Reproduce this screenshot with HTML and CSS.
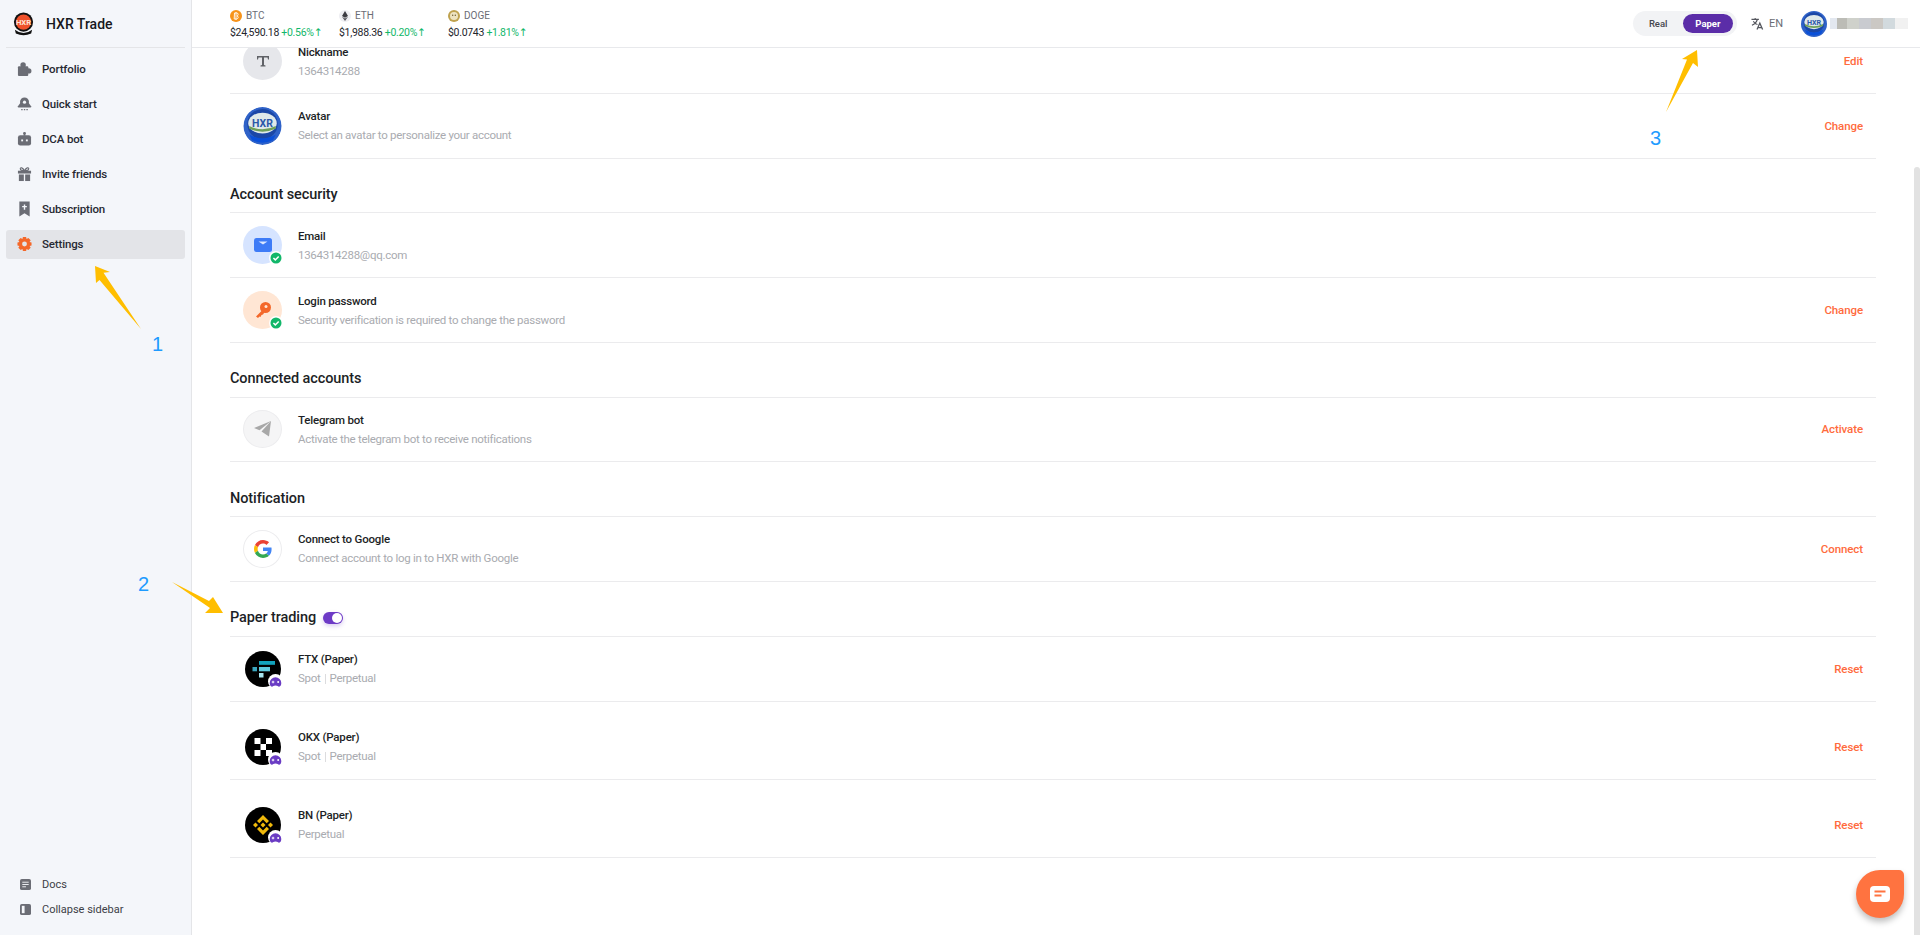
FILE: index.html
```html
<!DOCTYPE html>
<html lang="en">
<head>
  <meta charset="UTF-8">
  <title>HXR Trade - Settings</title>
  <link rel="stylesheet" href="styles.css">
</head>
<body>
  <svg class="defs" width="0" height="0">
    <defs>
      <g id="hxr-blue">
        <circle cx="20" cy="20" r="20" fill="#2f62c8"/>
        <circle cx="20" cy="18" r="16" fill="#1b47a6"/>
        <ellipse cx="20" cy="17" rx="15" ry="11" fill="#dfe9ea"/>
        <path d="M6 20q14 7 28 0v3q-14 6-28 0z" fill="#6fa05a"/>
        <text x="20" y="21" text-anchor="middle" class="helmet-txt" fill="#2b58a8">HXR</text>
        <path d="M6 29q14 8 28 0l-3 6q-11 5-22 0z" fill="#0a50d8"/>
      </g>
      <g id="badge-ok">
        <circle cx="7" cy="7" r="7" fill="#fff"/>
        <circle cx="7" cy="7" r="5.500" fill="#12b76a"/>
        <path d="M4.400 7l1.900 1.900 3.400-3.500" fill="none" stroke="#fff" stroke-width="1.500"/>
      </g>
      <g id="badge-game">
        <circle cx="7" cy="7" r="7" fill="#fff"/>
        <path d="M1.600 8.500a5.400 5.400 0 0 1 10.800 0c0 2.300-1 3.300-2 3.300-1.100 0-1.500-1-3.400-1s-2.300 1-3.400 1c-1 0-2-1-2-3.300z" fill="#6a3cc4"/>
        <path d="M3.500 7.500h2.400M4.700 6.300v2.400" stroke="#fff" stroke-width=".9"/>
        <circle cx="9.500" cy="7.500" r=".9" fill="#fff"/>
      </g>
    </defs>
  </svg>

  <div class="app">
    <aside class="sidebar">
      <div class="brand">
        <svg class="logo" viewBox="0 0 24 24">
          <path d="M3 18q9 7 18 0l-1 4q-8 3.500-16 0z" fill="#111"/>
          <circle cx="12" cy="10" r="10" fill="#111"/>
          <circle cx="12" cy="10" r="8" fill="#f0512b"/>
          <text x="12" y="12.800" text-anchor="middle" class="logo-txt" fill="#ffe3d6">HXR</text>
        </svg>
        <span class="brand-name">HXR Trade</span>
      </div>

      <nav class="nav">
        <a class="nav-item">
          <svg viewBox="0 0 16 16" fill="#6b6d75"><rect x="1" y="5" width="11" height="10.500" rx="1"/><circle cx="6.500" cy="3.700" r="2.900"/><circle cx="12.500" cy="10" r="2.900"/></svg>
          Portfolio
        </a>
        <a class="nav-item">
          <svg viewBox="0 0 16 16"><circle cx="8" cy="5.800" r="4.800" fill="#6b6d75"/><path d="M3.500 7L1 10.500q-.5 1.300.8 1.300h12.400q1.300 0 .8-1.300L12.500 7z" fill="#6b6d75"/><circle cx="8" cy="6" r="1.700" fill="#f4f6fa"/><path d="M4.500 14h1.500M7.300 14h1.500M10 14h1.500" stroke="#6b6d75" stroke-width="1.300"/></svg>
          Quick start
        </a>
        <a class="nav-item">
          <svg viewBox="0 0 16 16"><rect x="1" y="4" width="14" height="11" rx="2.500" fill="#6b6d75"/><rect x="7" y="1" width="2" height="3.500" fill="#6b6d75"/><circle cx="8" cy="1.800" r="1.300" fill="#6b6d75"/><rect x="4.500" y="8.500" width="2" height="2" fill="#f4f6fa"/><rect x="9.500" y="8.500" width="2" height="2" fill="#f4f6fa"/></svg>
          DCA bot
        </a>
        <a class="nav-item">
          <svg viewBox="0 0 16 16"><rect x="1" y="4.500" width="14" height="3" fill="#6b6d75"/><rect x="2" y="8.500" width="5.300" height="7" fill="#6b6d75"/><rect x="8.700" y="8.500" width="5.300" height="7" fill="#6b6d75"/><path d="M8 4.500C6 1 3.500.500 3.500 2.500S6 4.500 8 4.500zm0 0c2-3.500 4.500-4 4.500-2s-2.500 2-4.500 2z" fill="none" stroke="#6b6d75" stroke-width="1.200"/></svg>
          Invite friends
        </a>
        <a class="nav-item">
          <svg viewBox="0 0 16 16"><path d="M2.500 0h11v16L8 12.500 2.500 16z" fill="#6b6d75"/><path d="M8 3.200v5.600M5.500 5.500h5" stroke="#f4f6fa" stroke-width="1.500"/></svg>
          Subscription
        </a>
        <a class="nav-item active">
          <svg viewBox="0 0 16 16"><path d="M6.300.500h3.400l.5 2.100 1.900-1 2.500 2.500-1.200 1.800 2.100.5v3.200l-2.100.5 1.200 1.800-2.500 2.500-1.900-1-.5 2.100H6.300l-.5-2.100-1.900 1-2.500-2.500L2.600 10.100.5 9.600V6.400l2.100-.5L1.400 4.100 3.900 1.600l1.900 1z" fill="#f4682a"/><circle cx="8" cy="8" r="2.600" fill="#e3e4e8"/></svg>
          Settings
        </a>
      </nav>

      <div class="side-bottom">
        <a class="side-link">
          <svg viewBox="0 0 12 12"><rect width="12" height="12" rx="2" fill="#6b6d75"/><path d="M2.500 3.500h7M2.500 6h7M2.500 8.500h4" stroke="#f4f6fa"/></svg>
          Docs
        </a>
        <a class="side-link">
          <svg viewBox="0 0 12 12"><rect width="12" height="12" rx="2" fill="#6b6d75"/><rect x="2" y="2" width="3" height="8" fill="#f4f6fa"/></svg>
          Collapse sidebar
        </a>
      </div>
    </aside>

    <div class="main">
      <header class="topbar">
        <div class="tickers">
          <div class="ticker">
            <div class="coin">
              <svg viewBox="0 0 12 12"><circle cx="6" cy="6" r="6" fill="#f7931a"/><path d="M4.500 3h2.300q1.500.2 1.300 1.500T7 6q1.400.3 1.200 1.500T6.500 9H4.200zM6 2v8" fill="none" stroke="#fff" stroke-width=".9"/></svg>
              BTC
            </div>
            <div class="quote">$24,590.18 <span class="up">+0.56%<i class="arr">↑</i></span></div>
          </div>
          <div class="ticker">
            <div class="coin">
              <svg viewBox="0 0 12 12"><circle cx="6" cy="6" r="6" fill="#eeeef2"/><path d="M6 1l3 5-3 1.800L3 6z" fill="#3c3c42"/><path d="M3 6.800l3 1.800 3-1.800L6 11z" fill="#55555c"/></svg>
              ETH
            </div>
            <div class="quote">$1,988.36 <span class="up">+0.20%<i class="arr">↑</i></span></div>
          </div>
          <div class="ticker">
            <div class="coin">
              <svg viewBox="0 0 12 12"><circle cx="6" cy="6" r="6" fill="#bfa24f"/><circle cx="6" cy="6" r="4" fill="#eee3c0"/><circle cx="4.700" cy="5.300" r=".7" fill="#6b5a2a"/><circle cx="7.300" cy="5.300" r=".7" fill="#6b5a2a"/></svg>
              DOGE
            </div>
            <div class="quote">$0.0743 <span class="up">+1.81%<i class="arr">↑</i></span></div>
          </div>
        </div>

        <div class="top-right">
          <div class="mode-switch">
            <span class="mode">Real</span>
            <span class="mode on">Paper</span>
          </div>
          <div class="lang">
            <svg viewBox="0 0 14 14"><path d="M.500 2.500h8M4.500 1v1.500M7 2.500Q5.500 7 1 9M2.500 4.500Q4 7.500 7 8" fill="none" stroke="#55575e" stroke-width="1.200"/><path d="M6.500 13.500l3-7 3 7M7.700 11.500h3.600" fill="none" stroke="#55575e" stroke-width="1.400"/></svg>
            EN
          </div>
          <svg class="user-avatar" viewBox="0 0 40 40"><use href="#hxr-blue"/></svg>
          <div class="user-name"><i></i><i></i><i></i><i></i><i></i><i></i><i></i></div>
        </div>
      </header>

      <div class="content">
        <div class="settings">
          <div class="row">
            <div class="pic grey">
              <svg viewBox="0 0 16 16" width="16" height="16"><path d="M2 3h12v3.500h-1L12.500 4.500H9V12l1.500.6V13.500h-5v-.9L7 12V4.500H3.500L3 6.500H2z" fill="#606267"/></svg>
            </div>
            <div class="info">
              <div class="name">Nickname</div>
              <div class="desc">1364314288</div>
            </div>
            <a class="action">Edit</a>
          </div>
          <div class="row">
            <svg class="pic" viewBox="0 0 40 40"><use href="#hxr-blue"/></svg>
            <div class="info">
              <div class="name">Avatar</div>
              <div class="desc">Select an avatar to personalize your account</div>
            </div>
            <a class="action">Change</a>
          </div>

          <h2 class="section">Account security</h2>
          <div class="row">
            <div class="pic blue">
              <svg viewBox="0 0 18 14" width="18" height="14"><rect width="18" height="14" rx="2.500" fill="#3d7bf7"/><path d="M4.500 3.500h9L9 6.500z" fill="#dbe7ff"/></svg>
              <svg class="badge" viewBox="0 0 14 14"><use href="#badge-ok"/></svg>
            </div>
            <div class="info">
              <div class="name">Email</div>
              <div class="desc">1364314288@qq.com</div>
            </div>
          </div>
          <div class="row">
            <div class="pic peach">
              <svg viewBox="0 0 18 18" width="18" height="18"><circle cx="11.500" cy="6.500" r="5.500" fill="#f4682a"/><circle cx="12" cy="5.500" r="1.500" fill="#ffe6d4"/><path d="M8 9.500L2 15.500l2 1.500 1.500-1.500 1 .5 1-2 1.500-.5 2-3z" fill="#f4682a"/></svg>
              <svg class="badge" viewBox="0 0 14 14"><use href="#badge-ok"/></svg>
            </div>
            <div class="info">
              <div class="name">Login password</div>
              <div class="desc">Security verification is required to change the password</div>
            </div>
            <a class="action">Change</a>
          </div>

          <h2 class="section">Connected accounts</h2>
          <div class="row">
            <div class="pic outline fill">
              <svg viewBox="0 0 18 16" width="18" height="16"><path d="M17 0L0 7l5.500 2.300L17 0 7.500 10.500 15 15.500z" fill="#a8a8a8"/></svg>
            </div>
            <div class="info">
              <div class="name">Telegram bot</div>
              <div class="desc">Activate the telegram bot to receive notifications</div>
            </div>
            <a class="action">Activate</a>
          </div>

          <h2 class="section">Notification</h2>
          <div class="row">
            <div class="pic outline">
              <svg viewBox="0 0 48 48" width="18" height="18">
                <path fill="#ea4335" d="M24 9.500c3.500 0 6.700 1.200 9.200 3.600l6.900-6.900C35.900 2.400 30.400 0 24 0 14.600 0 6.500 5.400 2.600 13.200l8 6.200C12.400 13.700 17.700 9.500 24 9.500z"/>
                <path fill="#4285f4" d="M46.900 24.500c0-1.600-.1-3.100-.4-4.500H24v9h12.900c-.6 3-2.200 5.500-4.700 7.200l7.700 6c4.500-4.200 7-10.300 7-17.700z"/>
                <path fill="#fbbc05" d="M10.500 28.600c-.5-1.400-.8-3-.8-4.600s.3-3.200.8-4.600l-8-6.200C.9 16.500 0 20.100 0 24s.9 7.500 2.600 10.800z"/>
                <path fill="#34a853" d="M24 48c6.500 0 11.900-2.100 15.900-5.800l-7.700-6c-2.200 1.400-4.900 2.300-8.200 2.300-6.300 0-11.600-4.200-13.500-9.900l-8 6.200C6.500 42.600 14.600 48 24 48z"/>
              </svg>
            </div>
            <div class="info">
              <div class="name">Connect to Google</div>
              <div class="desc">Connect account to log in to HXR with Google</div>
            </div>
            <a class="action">Connect</a>
          </div>

          <h2 class="section tall">Paper trading <span class="toggle"></span></h2>
          <div class="row">
            <div class="pic coin-pic">
              <svg viewBox="0 0 36 36" width="36" height="36"><circle cx="18" cy="18" r="18" fill="#000"/><rect x="14" y="10" width="16" height="3.800" fill="#12a3bd"/><rect x="14" y="16" width="11" height="4.300" fill="#5fcade"/><rect x="7.500" y="16" width="4.500" height="4.300" fill="#3ba5bd"/><rect x="14" y="22" width="4.500" height="4.500" fill="#a8e6f0"/></svg>
              <svg class="badge" viewBox="0 0 14 14"><use href="#badge-game"/></svg>
            </div>
            <div class="info">
              <div class="name">FTX (Paper)</div>
              <div class="desc">Spot<span class="sep"></span>Perpetual</div>
            </div>
            <a class="action">Reset</a>
          </div>
          <div class="row spaced">
            <div class="pic coin-pic">
              <svg viewBox="0 0 36 36" width="36" height="36"><circle cx="18" cy="18" r="18" fill="#000"/><g fill="#fff"><rect x="9.500" y="9" width="6" height="6"/><rect x="21" y="9" width="6" height="6"/><rect x="15.500" y="15" width="5.500" height="6"/><rect x="9.500" y="21" width="6" height="6"/><rect x="21" y="21" width="6" height="6"/></g></svg>
              <svg class="badge" viewBox="0 0 14 14"><use href="#badge-game"/></svg>
            </div>
            <div class="info">
              <div class="name">OKX (Paper)</div>
              <div class="desc">Spot<span class="sep"></span>Perpetual</div>
            </div>
            <a class="action">Reset</a>
          </div>
          <div class="row spaced">
            <div class="pic coin-pic">
              <svg viewBox="0 0 36 36" width="36" height="36"><circle cx="18" cy="18" r="18" fill="#000"/><g fill="#f0b90b"><path d="M18 8l6 6-2.300 2.300L18 12.600l-3.700 3.700L12 14z"/><path d="M18 28l6-6-2.300-2.300-3.700 3.700-3.700-3.700L12 22z"/><path d="M8 18l2.500-2.500L13 18l-2.500 2.500z"/><path d="M23 18l2.500-2.500L28 18l-2.500 2.500z"/><path d="M18 15.500l2.500 2.500-2.500 2.500-2.500-2.500z"/></g></svg>
              <svg class="badge" viewBox="0 0 14 14"><use href="#badge-game"/></svg>
            </div>
            <div class="info">
              <div class="name">BN (Paper)</div>
              <div class="desc">Perpetual</div>
            </div>
            <a class="action">Reset</a>
          </div>
        </div>
      </div>
    </div>
  </div>

  <div class="scroll-thumb"></div>

  <a class="chat-btn">
    <svg viewBox="0 0 20 16" width="20" height="16"><rect width="20" height="16" rx="4" fill="#fff"/><path d="M4.500 5.500h11M4.500 9.500h7" stroke="#ff7340" stroke-width="1.800"/></svg>
  </a>

  <!-- annotations drawn over the screenshot -->
  <svg class="marks" viewBox="0 0 1920 935" width="1920" height="935">
    <g fill="#ffbe00">
      <polygon points="95,266 110,272 103.500,272.700 141,329 99.500,280 96,283"/>
      <polygon points="172,582 209,601 213,597 223,613 205,613 210,608"/>
      <polygon points="1697,50 1698,67 1693,63 1666,112 1687,59.500 1682,59"/>
    </g>
  </svg>
  <span class="mark-num n1">1</span>
  <span class="mark-num n2">2</span>
  <span class="mark-num n3">3</span>
</body>
</html>
```
FILE: styles.css
```css
* {
  box-sizing: border-box;
}

html, body {
  margin: 0;
  height: 100%;
  overflow: hidden;
}

body {
  font-family: Roboto, "Liberation Sans", sans-serif;
  font-size: 12px;
  color: #1d1f26;
  background: #fff;
}

a {
  cursor: pointer;
}

.defs {
  position: absolute;
}

.helmet-txt {
  font-size: 11px;
  font-weight: 700;
}

.logo-txt {
  font-size: 8px;
  font-weight: 700;
}

.app {
  display: flex;
  height: 935px;
}

/* sidebar */
.sidebar {
  width: 192px;
  flex: none;
  display: flex;
  flex-direction: column;
  padding: 0 6px;
  background: #f4f6fa;
  border-right: 1px solid #e4e5e8;
}

.brand {
  height: 48px;
  display: flex;
  align-items: center;
  gap: 11px;
  padding-left: 6px;
  border-bottom: 1px solid #e4e5e8;
}

.logo {
  width: 23px;
  height: 24px;
}

.brand-name {
  font-size: 14px;
  font-weight: 500;
  color: #17181d;
}

.nav {
  display: flex;
  flex-direction: column;
  gap: 6.200px;
  padding-top: 6px;
}

.nav-item {
  height: 29px;
  display: flex;
  align-items: center;
  gap: 10px;
  padding-left: 11px;
  border-radius: 3px;
  font-size: 11.500px;
  font-weight: 500;
  letter-spacing: -.15px;
  color: #272932;
}

.nav-item svg {
  width: 15px;
  height: 16px;
  flex: none;
}

.nav-item.active {
  background: #e3e4e8;
}

.side-bottom {
  margin-top: auto;
  padding: 0 0 18px 14px;
  display: flex;
  flex-direction: column;
  gap: 9px;
}

.side-link {
  height: 16px;
  display: flex;
  align-items: center;
  gap: 11px;
  font-size: 11px;
  color: #3c3e46;
}

.side-link svg {
  width: 11px;
  height: 11px;
}

/* top bar */
.main {
  flex: 1;
  min-width: 0;
  display: flex;
  flex-direction: column;
}

.topbar {
  height: 48px;
  flex: none;
  display: flex;
  align-items: center;
  justify-content: space-between;
  padding: 0 12px 0 38px;
  background: #fff;
  border-bottom: 1px solid #e8e9ec;
  position: relative;
  z-index: 2;
}

.tickers {
  display: flex;
}

.ticker {
  width: 109px;
}

.coin {
  display: flex;
  align-items: center;
  gap: 4px;
  height: 14px;
  margin-bottom: 3px;
  font-size: 10px;
  color: #6b6d75;
}

.coin svg {
  width: 12px;
  height: 12px;
}

.quote {
  font-size: 10.500px;
  letter-spacing: -.3px;
  color: #23252c;
  white-space: nowrap;
}

.up {
  color: #12b76a;
}

.arr {
  font-family: "DejaVu Sans", sans-serif;
  font-style: normal;
}

.top-right {
  display: flex;
  align-items: center;
}

.mode-switch {
  width: 104px;
  height: 25px;
  display: flex;
  align-items: center;
  justify-content: space-between;
  padding: 0 4px 0 16px;
  border-radius: 13px;
  background: #f2f3f5;
  font-size: 9.500px;
  font-weight: 500;
  color: #45474e;
}

.mode.on {
  width: 50px;
  height: 19px;
  display: flex;
  align-items: center;
  justify-content: center;
  border-radius: 10px;
  background: #5b2da8;
  color: #fff;
  font-weight: 700;
}

.lang {
  display: flex;
  align-items: center;
  gap: 5px;
  margin-left: 14px;
  font-size: 11px;
  color: #6b6d75;
}

.lang svg {
  width: 13px;
  height: 13px;
}

.user-avatar {
  width: 26px;
  height: 26px;
  margin-left: 18px;
}

.user-name {
  display: flex;
  height: 11px;
  margin-left: 3px;
}

.user-name i {
  width: 12px;
}

.user-name i:nth-child(1) { width: 7px; background: #e3e8f0; }
.user-name i:nth-child(2) { width: 10px; background: #bcbcb6; }
.user-name i:nth-child(3) { background: #cfd1cb; }
.user-name i:nth-child(4) { background: #c9cbd0; }
.user-name i:nth-child(5) { background: #cbc8c4; }
.user-name i:nth-child(6) { background: #d2dade; }
.user-name i:nth-child(7) { width: 13px; background: #f1f1f1; }

/* settings list, scrolled a little past the first row */
.content {
  flex: 1;
  min-height: 0;
  overflow: hidden;
  padding: 0 44px 0 38px;
}

.settings {
  margin-top: -18.800px;
}

.row {
  height: 64.800px;
  display: flex;
  align-items: center;
  padding: 0 13px 0 13px;
  border-bottom: 1px solid #ebebed;
}

.row.spaced {
  height: 78px;
  padding-top: 13px;
}

.section {
  height: 54.600px;
  margin: 0;
  padding-top: 19px;
  display: flex;
  align-items: center;
  gap: 7px;
  font-size: 14.500px;
  line-height: 24px;
  font-weight: 500;
  letter-spacing: -.1px;
  color: #1d1f26;
  border-bottom: 1px solid #ebebed;
}

.section.tall {
  height: 55.200px;
}

.pic {
  width: 39px;
  height: 38px;
  flex: none;
  display: flex;
  align-items: center;
  justify-content: center;
  position: relative;
  border-radius: 50%;
}

.pic.grey { background: #e6e7eb; }
.pic.blue { background: #d6e4ff; }
.pic.peach { background: #ffe6d4; }
.pic.outline { border: 1px solid #ececee; }
.pic.fill { background: #f5f5f6; }

.badge {
  width: 14px;
  height: 14px;
  position: absolute;
  right: -1px;
  bottom: -1px;
}

.coin-pic .badge {
  width: 15px;
  height: 15px;
}

.info {
  margin-left: 16px;
  padding-top: 1px;
  flex: 1;
}

.name {
  font-size: 11.500px;
  line-height: 15px;
  font-weight: 500;
  letter-spacing: -.2px;
  color: #1d1f26;
}

.desc {
  margin-top: 4px;
  font-size: 11.500px;
  line-height: 15px;
  letter-spacing: -.28px;
  color: #a9abb0;
  display: flex;
  align-items: center;
}

.sep {
  width: 1px;
  height: 10px;
  margin: 0 4px;
  background: #dcdcde;
}

.action {
  font-size: 11.500px;
  font-weight: 500;
  letter-spacing: -.1px;
  color: #ff6b3d;
}

.toggle {
  width: 20px;
  height: 12px;
  position: relative;
  border-radius: 6px;
  background: #6d3ac6;
  box-shadow: 0 2px 4px rgba(109, 58, 198, .25);
}

.toggle::after {
  content: "";
  position: absolute;
  right: 1px;
  top: 1px;
  width: 10px;
  height: 10px;
  border-radius: 50%;
  background: #fff;
}

/* things lying over the page */
.scroll-thumb {
  position: absolute;
  left: 1914px;
  top: 167px;
  width: 6px;
  height: 768px;
  border-radius: 3px 3px 0 0;
  background: #e2e2e2;
}

.chat-btn {
  position: absolute;
  left: 1856px;
  top: 870px;
  width: 48px;
  height: 48px;
  display: flex;
  align-items: center;
  justify-content: center;
  border-radius: 50% 5px 50% 50%;
  background: #ff7340;
  box-shadow: 0 4px 6px rgba(0, 0, 0, .25);
}

.marks {
  position: absolute;
  left: 0;
  top: 0;
  pointer-events: none;
}

.mark-num {
  position: absolute;
  font-family: "Liberation Sans", sans-serif;
  font-size: 20px;
  line-height: 24px;
  color: #1e9bff;
}

.n1 { left: 152px; top: 332px; }
.n2 { left: 138px; top: 572px; }
.n3 { left: 1650px; top: 126px; }
```
